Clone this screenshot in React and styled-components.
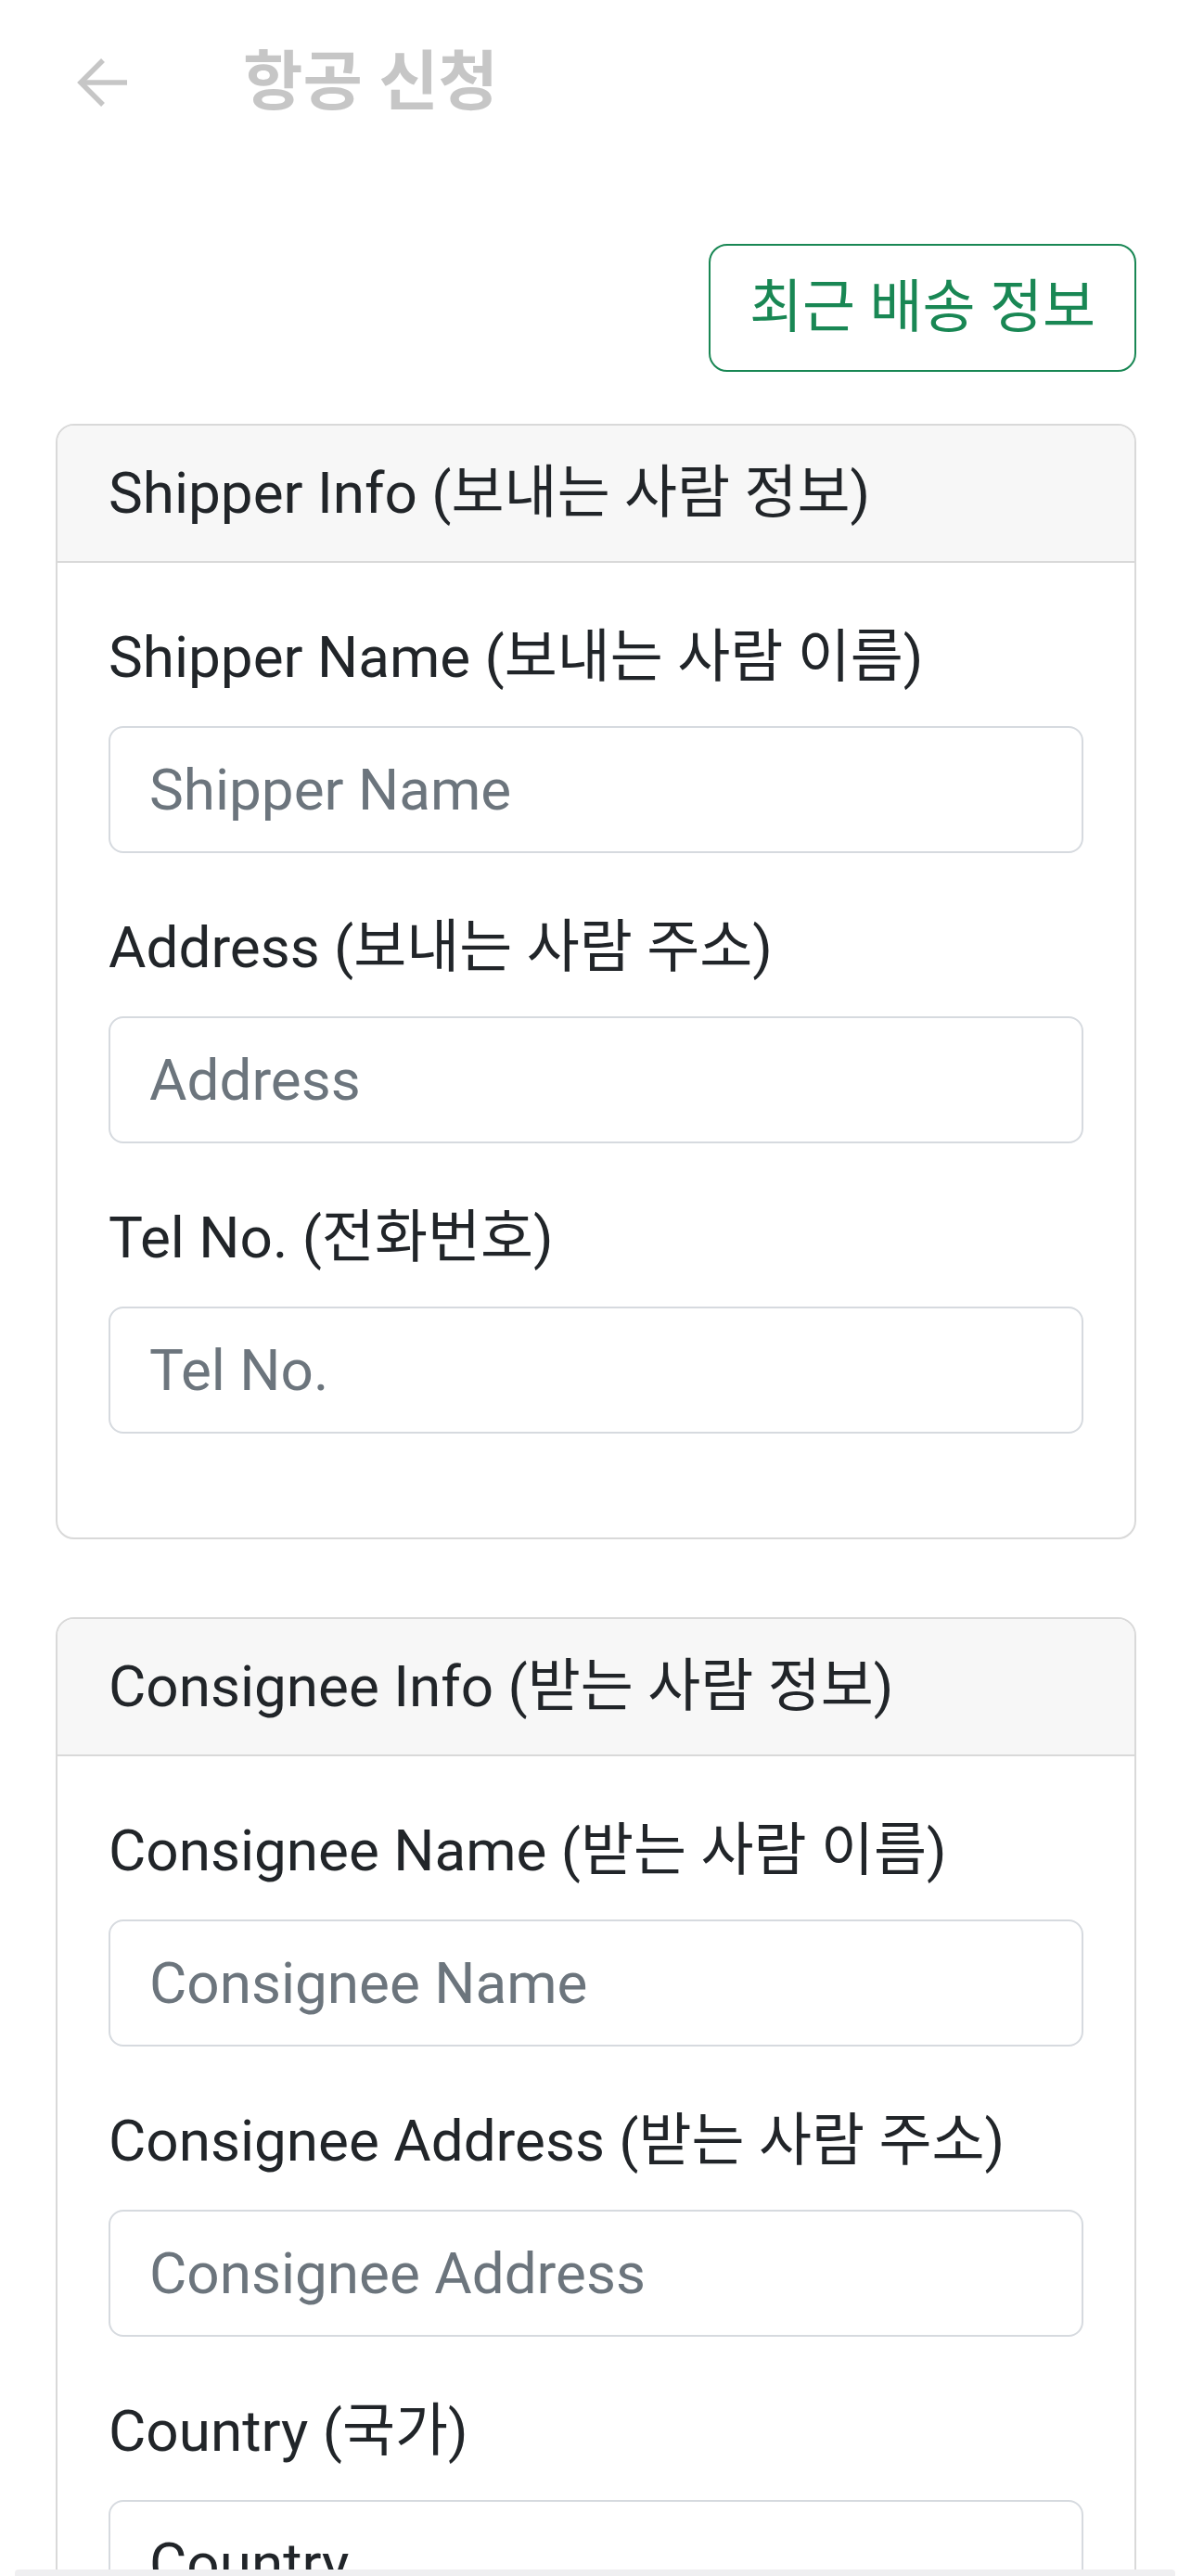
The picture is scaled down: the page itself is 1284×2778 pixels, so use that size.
import React from 'react';
import styled, { createGlobalStyle } from 'styled-components';

const GlobalStyle = createGlobalStyle`
  html, body {
    margin: 0;
    padding: 0;
    background: #ffffff;
  }
  body {
    font-family: Roboto, "Noto Sans CJK KR", sans-serif;
    color: #212529;
  }
  * {
    box-sizing: border-box;
  }
`;

const Page = styled.div`
  padding: 0 59px 0 60px;
`;

const TopBar = styled.header`
  display: flex;
  align-items: center;
  height: 178px;
  padding-left: 22px;
`;

const BackButton = styled.button`
  display: flex;
  align-items: center;
  justify-content: center;
  width: 56px;
  height: 56px;
  padding: 0;
  border: none;
  background: transparent;
  color: #c6c6c6;
  cursor: pointer;
`;

const Title = styled.h1`
  margin: 0 0 0 124px;
  font-size: 70px;
  font-weight: 700;
  line-height: 1;
  color: #c6c6c6;
`;

const ActionRow = styled.div`
  display: flex;
  justify-content: flex-end;
  margin: 85px 0 56px;
`;

const OutlineButton = styled.button`
  height: 138px;
  padding: 0 42px;
  border: 2px solid #198754;
  border-radius: 20px;
  background: #ffffff;
  color: #198754;
  font-family: Roboto, "Noto Sans CJK KR", sans-serif;
  font-size: 62px;
  line-height: 92px;
  cursor: pointer;
`;

const Card = styled.section`
  border: 2px solid #d9d9d9;
  border-radius: 20px;
  margin-bottom: 84px;
  overflow: hidden;
`;

const CardHeader = styled.div`
  padding: 27px 55px;
  background: #f7f7f7;
  border-bottom: 2px solid #d9d9d9;
  font-size: 62px;
  line-height: 92px;
`;

const CardBody = styled.div`
  padding: 56px 55px;
`;

const Field = styled.div`
  margin-bottom: 56px;
`;

const Label = styled.label`
  display: block;
  margin-bottom: 28px;
  font-size: 62px;
  line-height: 92px;
`;

const TextInput = styled.input`
  display: block;
  width: 100%;
  height: 137px;
  padding: 0 42px;
  border: 2px solid #d6dadf;
  border-radius: 16px;
  background: #ffffff;
  font-family: Roboto, "Noto Sans CJK KR", sans-serif;
  font-size: 62px;
  color: #212529;
  outline: none;

  &::placeholder {
    color: #6c757d;
  }
`;

const Select = styled.select`
  display: block;
  width: 100%;
  height: 137px;
  padding: 0 42px;
  border: 2px solid #d6dadf;
  border-radius: 16px;
  background: #ffffff;
  font-family: Roboto, "Noto Sans CJK KR", sans-serif;
  font-size: 62px;
  color: #212529;
  appearance: none;
  outline: none;
`;

const BottomSheet = styled.div`
  position: fixed;
  left: 16px;
  right: 17px;
  bottom: 0;
  height: 7px;
  background: #efeff1;
  border-radius: 4px 4px 0 0;
`;

function ArrowLeft() {
  return (
    <svg width="56" height="56" viewBox="0 0 56 56" fill="none">
      <path d="M55 28H4" stroke="currentColor" strokeWidth="5.5" />
      <path d="M29 4L5 28L29 52" stroke="currentColor" strokeWidth="5.5" />
    </svg>
  );
}

const shipperFields = [
  { label: 'Shipper Name (보내는 사람 이름)', placeholder: 'Shipper Name' },
  { label: 'Address (보내는 사람 주소)', placeholder: 'Address' },
  { label: 'Tel No. (전화번호)', placeholder: 'Tel No.' },
];

const consigneeFields = [
  { label: 'Consignee Name (받는 사람 이름)', placeholder: 'Consignee Name' },
  { label: 'Consignee Address (받는 사람 주소)', placeholder: 'Consignee Address' },
];

function FormField({ label, placeholder }) {
  return (
    <Field>
      <Label>{label}</Label>
      <TextInput type="text" placeholder={placeholder} />
    </Field>
  );
}

export default function App() {
  return (
    <>
      <GlobalStyle />
      <Page>
        <TopBar>
          <BackButton aria-label="뒤로">
            <ArrowLeft />
          </BackButton>
          <Title>항공 신청</Title>
        </TopBar>

        <ActionRow>
          <OutlineButton>최근 배송 정보</OutlineButton>
        </ActionRow>

        <Card>
          <CardHeader>Shipper Info (보내는 사람 정보)</CardHeader>
          <CardBody>
            {shipperFields.map((f) => (
              <FormField key={f.label} {...f} />
            ))}
          </CardBody>
        </Card>

        <Card>
          <CardHeader>Consignee Info (받는 사람 정보)</CardHeader>
          <CardBody>
            {consigneeFields.map((f) => (
              <FormField key={f.label} {...f} />
            ))}
            <Field>
              <Label>Country (국가)</Label>
              <Select defaultValue="">
                <option value="">Country</option>
              </Select>
            </Field>
          </CardBody>
        </Card>
      </Page>
      <BottomSheet />
    </>
  );
}
